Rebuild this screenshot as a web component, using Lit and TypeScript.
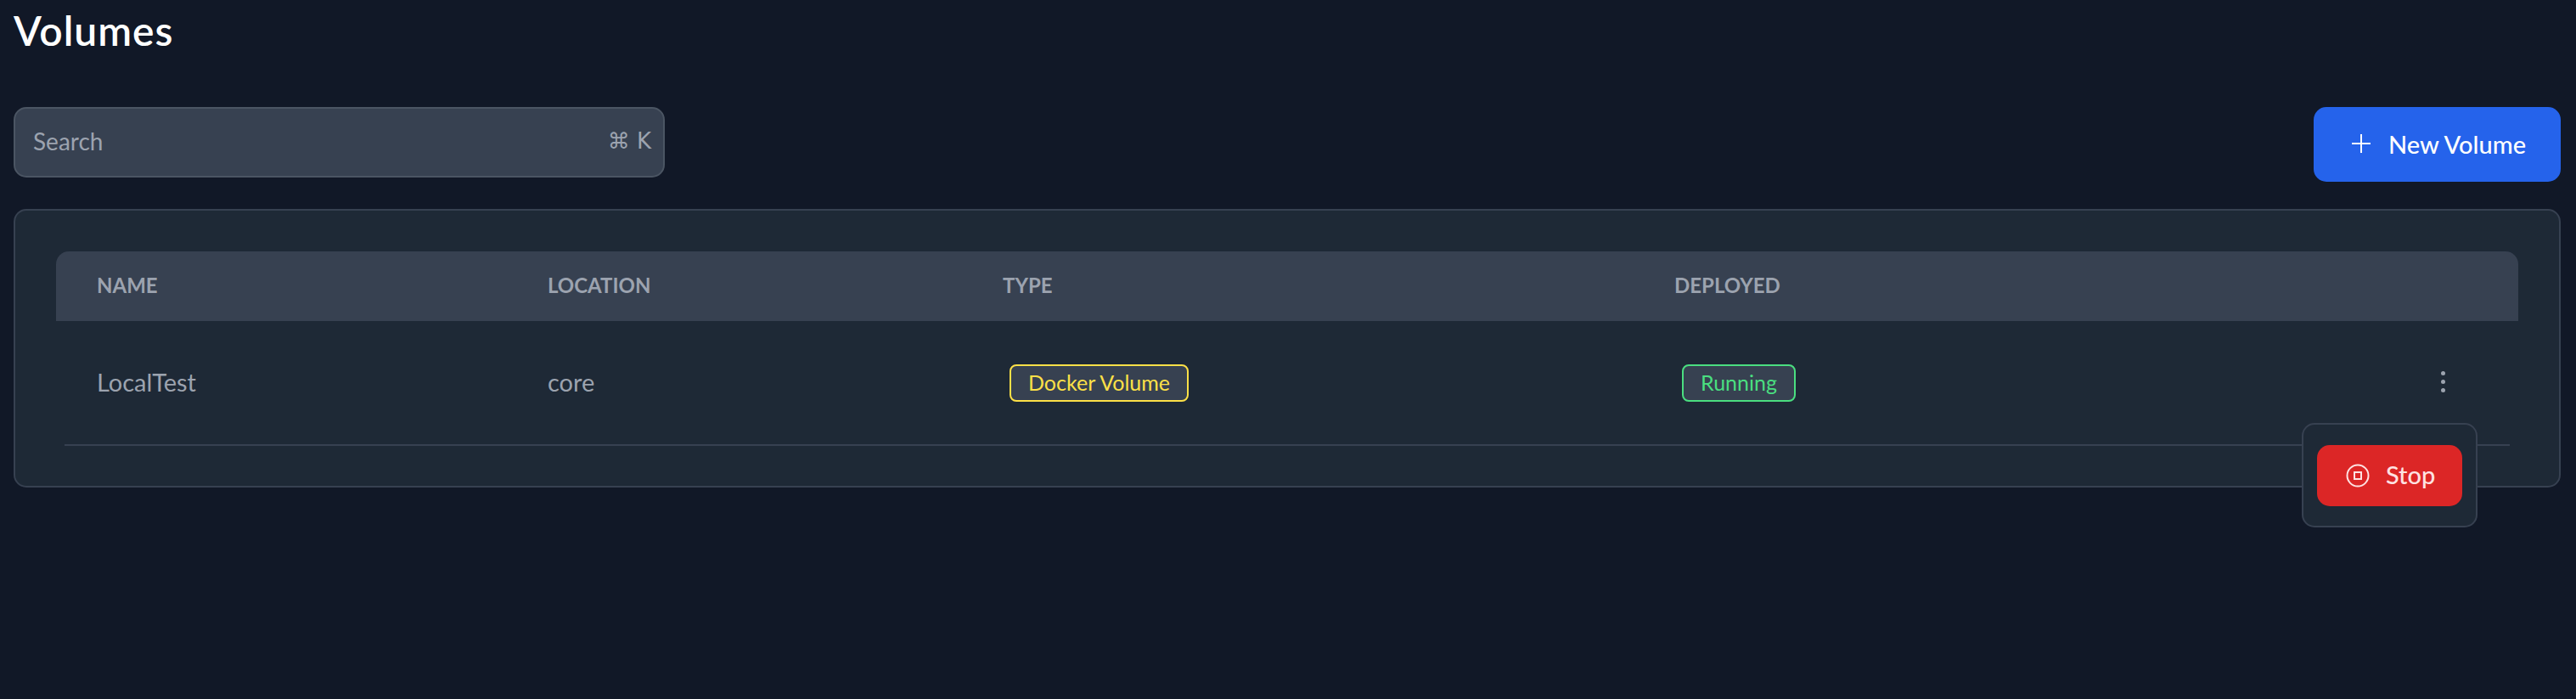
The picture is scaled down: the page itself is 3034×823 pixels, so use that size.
import { LitElement, html, css } from 'lit';
import { customElement } from 'lit/decorators.js';

@customElement('app-root')
export class AppRoot extends LitElement {
  static styles = css`
    :host {
      display: block;
      min-height: 823px;
      box-sizing: border-box;
      padding: 0 18px 0 16px;
      background: #111827;
      font-family: 'Lato', 'Noto Sans', sans-serif;
      color: #9ca3af;
    }

    * {
      box-sizing: border-box;
    }

    h1 {
      margin: 0 0 54px;
      height: 72px;
      line-height: 72px;
      font-size: 48px;
      font-weight: 600;
      letter-spacing: 1px;
      color: #fff;
    }

    .toolbar {
      display: flex;
      align-items: flex-start;
      justify-content: space-between;
      margin-bottom: 32px;
    }

    .search {
      display: flex;
      align-items: center;
      justify-content: space-between;
      width: 767px;
      height: 83px;
      padding: 0 14px 3px 21px;
      background: #374151;
      border: 2px solid #4b5563;
      border-radius: 15px;
      font-size: 28px;
    }

    .kbd {
      font-family: 'DejaVu Sans', sans-serif;
      font-size: 26px;
    }

    .btn {
      display: flex;
      align-items: center;
      border: none;
      color: #fff;
      font-family: inherit;
      font-weight: 500;
      font-size: 29px;
      border-radius: 15px;
    }

    .btn.new {
      width: 291px;
      height: 88px;
      padding: 0 0 2px 44px;
      gap: 20px;
      background: #2563eb;
    }

    .card {
      position: relative;
      height: 328px;
      padding: 48px;
      background: #1e2936;
      border: 2px solid #374151;
      border-radius: 15px;
    }

    .row {
      display: grid;
      grid-template-columns: 531px 536px 791px 1fr;
      align-items: center;
    }

    .row > div {
      padding-left: 48px;
    }

    .head {
      height: 82px;
      padding-bottom: 3px;
      background: #374151;
      border-radius: 15px 15px 0 0;
      font-size: 24px;
      font-weight: 700;
      text-transform: uppercase;
    }

    .body {
      height: 145px;
      font-size: 29px;
    }

    .row > .text {
      padding-bottom: 3px;
    }

    .row > .cell {
      display: flex;
    }

    .rule {
      height: 2px;
      margin: 0 10px;
      background: #374151;
    }

    .badge {
      display: flex;
      align-items: center;
      height: 44px;
      padding: 0 20px 2px;
      background: #374151;
      border: 2px solid;
      border-radius: 8px;
      font-size: 25px;
    }

    .badge.type {
      margin-left: 8px;
      color: #fde047;
    }

    .badge.state {
      margin-left: 9px;
      color: #4ade80;
    }

    .dots {
      position: absolute;
      left: 2857px;
      top: 189px;
      display: flex;
      flex-direction: column;
      gap: 5px;
    }

    .dots i {
      width: 5px;
      height: 5px;
      border-radius: 50%;
      background: #9ca3af;
    }

    .menu {
      position: absolute;
      top: 250px;
      right: 96px;
      width: 207px;
      height: 123px;
      padding: 24px 16px;
      background: #1e2936;
      border: 2px solid #374151;
      border-radius: 15px;
    }

    .btn.stop {
      width: 171px;
      height: 72px;
      padding: 0 0 0 34px;
      gap: 19px;
      background: #dc2626;
      color: #fee2e2;
    }

    .btn.stop span {
      margin-top: -3px;
    }
  `;

  render() {
    return html`
      <h1>Volumes</h1>
      <div class="toolbar">
        <div class="search"><span>Search</span><span class="kbd">⌘ K</span></div>
        <button class="btn new">
          <svg width="24" height="24" viewBox="0 0 24 24" fill="none" stroke="currentColor" stroke-width="2">
            <path d="M1 12h22M12 1v22" />
          </svg>
          New Volume
        </button>
      </div>
      <div class="card">
        <div class="row head">
          <div>Name</div>
          <div>Location</div>
          <div>Type</div>
          <div>Deployed</div>
        </div>
        <div class="row body">
          <div class="text">LocalTest</div>
          <div class="text">core</div>
          <div class="cell"><span class="badge type">Docker Volume</span></div>
          <div class="cell"><span class="badge state">Running</span></div>
        </div>
        <div class="rule"></div>
        <div class="dots"><i></i><i></i><i></i></div>
        <div class="menu">
          <button class="btn stop">
            <svg width="28" height="28" viewBox="0 0 28 28" fill="none" stroke="currentColor" stroke-width="2">
              <circle cx="14" cy="14" r="12.5" />
              <rect x="10" y="10" width="8" height="8" />
            </svg>
            <span>Stop</span>
          </button>
        </div>
      </div>
    `;
  }
}

declare global {
  interface HTMLElementTagNameMap {
    'app-root': AppRoot;
  }
}
